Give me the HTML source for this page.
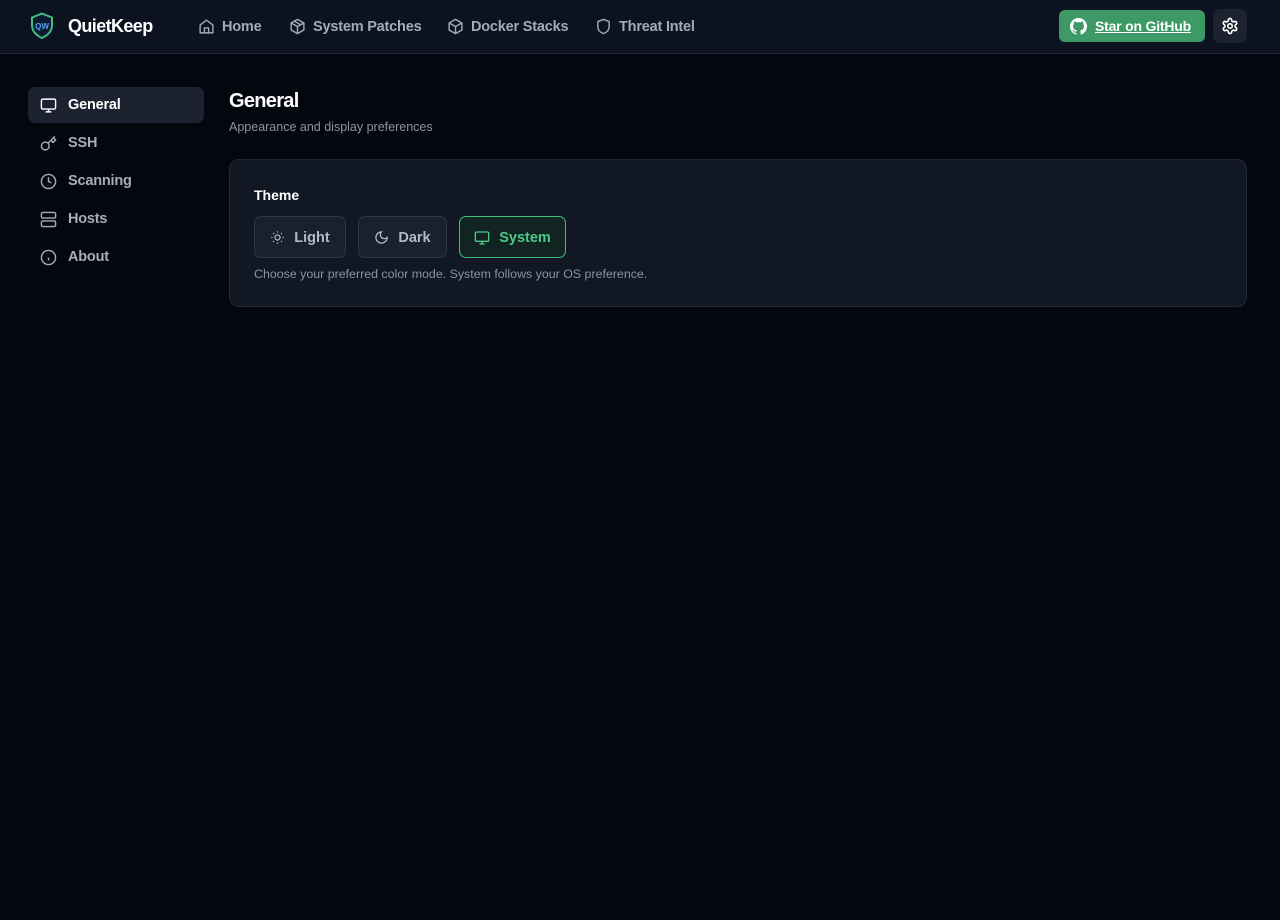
<!DOCTYPE html>
<html><head><meta charset="utf-8"><style>
*{box-sizing:border-box;margin:0;padding:0}
body{width:1280px;height:920px;background:#05070f;font-family:"Liberation Sans",sans-serif;color:#e5e7eb;position:relative;overflow:hidden}
.hdr{position:absolute;left:0;top:0;width:1280px;height:54px;background:#0d1220;border-bottom:1px solid #1c2333}
.abs{position:absolute}
svg{display:block}
.nav{position:absolute;top:18px;display:flex;align-items:center;gap:7px;color:#a3aab8;font-size:14.5px;font-weight:bold;letter-spacing:-0.2px}
.side{position:absolute;left:28px;width:176px;height:36px;display:flex;align-items:center;padding-left:12px;gap:11px;font-size:14.5px;font-weight:bold;color:#a7adb9;border-radius:7px;letter-spacing:-0.2px}
.btn{position:absolute;top:216px;height:42px;border-radius:7px;border:1px solid #2d3645;background:#1a202c;display:flex;align-items:center;justify-content:center;gap:9px;font-size:14.5px;font-weight:bold;color:#b3b9c5;padding-top:1px}
</style></head><body>
<div class="hdr"></div>
<svg class="abs" style="left:30px;top:12px" width="24" height="28" viewBox="0 0 24 28"><path d="M12 1.5 L22 5.5 V13 C22 19.5 17.5 23.5 12 26 C6.5 23.5 2 19.5 2 13 V5.5 Z" fill="#0f1b2e" stroke="#3fbf7f" stroke-width="2"/><text x="12" y="17" font-family="Liberation Sans" font-size="8" font-weight="bold" fill="#5aa0ff" text-anchor="middle">QW</text></svg>
<div class="abs" style="left:68px;top:16px;font-size:18px;font-weight:bold;color:#fff;letter-spacing:-0.6px">QuietKeep</div>
<div class="nav" style="left:198px"><svg width="17" height="17" viewBox="0 0 24 24" fill="none" stroke="#a3aab8" stroke-width="2" stroke-linejoin="round"><path d="M3 10 12 3l9 7v11H3z"/><path d="M9 21v-7h6v7"/></svg>Home</div>
<div class="nav" style="left:289px"><svg width="17" height="17" viewBox="0 0 24 24" fill="none" stroke="#a3aab8" stroke-width="2" stroke-linejoin="round"><path d="M12 2 21 7v10l-9 5-9-5V7z"/><path d="M3 7l9 5 9-5M12 12v10M7.5 4.5l9 5"/></svg>System Patches</div>
<div class="nav" style="left:447px"><svg width="17" height="17" viewBox="0 0 24 24" fill="none" stroke="#a3aab8" stroke-width="2" stroke-linejoin="round"><path d="M12 2 21 7v10l-9 5-9-5V7z"/><path d="M3 7l9 5 9-5M12 12v10"/></svg>Docker Stacks</div>
<div class="nav" style="left:595px"><svg width="17" height="17" viewBox="0 0 24 24" fill="none" stroke="#a3aab8" stroke-width="2" stroke-linejoin="round"><path d="M12 2 20 5v7c0 5-3.5 8.5-8 10-4.5-1.5-8-5-8-10V5z"/></svg>Threat Intel</div>
<div class="abs" style="left:1059px;top:10px;width:146px;height:32px;background:#3d9a67;border-radius:6px;display:flex;align-items:center;padding-left:11px;gap:8px;color:#fff;font-size:14px;font-weight:bold;letter-spacing:-0.2px"><svg width="17" height="17" viewBox="0 0 16 16" fill="#fff"><path d="M8 0C3.58 0 0 3.58 0 8c0 3.54 2.290 6.53 5.47 7.59.4.07.55-.17.55-.38v-1.330c-2.230.48-2.7-1.070-2.7-1.070-.36-.92-.89-1.170-.89-1.170-.73-.5.06-.49.06-.49.8.06 1.230.83 1.230.83.71 1.220 1.870.87 2.330.66.07-.52.28-.87.51-1.070-1.780-.2-3.640-.89-3.640-3.950 0-.87.31-1.590.82-2.150-.08-.2-.36-1.020.08-2.120 0 0 .67-.21 2.200.82a7.600 7.600 0 0 1 4 0c1.530-1.040 2.200-.82 2.200-.82.44 1.100.16 1.920.08 2.120.51.56.82 1.270.82 2.150 0 3.070-1.870 3.750-3.650 3.950.29.25.54.73.54 1.480v2.190c0 .21.15.46.55.38A8 8 0 0 0 16 8c0-4.420-3.580-8-8-8z"/></svg><span style="text-decoration:underline">Star on GitHub</span></div>
<div class="abs" style="left:1213px;top:9px;width:34px;height:34px;background:#1c2230;border-radius:7px;display:flex;align-items:center;justify-content:center"><svg width="18" height="18" viewBox="0 0 24 24" fill="none" stroke="#fff" stroke-width="2.2" stroke-linejoin="round"><path d="M12.2 2h-.4a2 2 0 0 0-2 2v.2a2 2 0 0 1-1 1.7l-.4.3a2 2 0 0 1-2 0l-.2-.1a2 2 0 0 0-2.7.7l-.2.4a2 2 0 0 0 .7 2.7l.2.1a2 2 0 0 1 1 1.7v.5a2 2 0 0 1-1 1.8l-.2.1a2 2 0 0 0-.7 2.7l.2.4a2 2 0 0 0 2.7.7l.2-.1a2 2 0 0 1 2 0l.4.3a2 2 0 0 1 1 1.7v.2a2 2 0 0 0 2 2h.4a2 2 0 0 0 2-2v-.2a2 2 0 0 1 1-1.7l.4-.3a2 2 0 0 1 2 0l.2.1a2 2 0 0 0 2.7-.7l.2-.4a2 2 0 0 0-.7-2.7l-.2-.1a2 2 0 0 1-1-1.8v-.5a2 2 0 0 1 1-1.7l.2-.1a2 2 0 0 0 .7-2.7l-.2-.4a2 2 0 0 0-2.7-.7l-.2.1a2 2 0 0 1-2 0l-.4-.3a2 2 0 0 1-1-1.7V4a2 2 0 0 0-2-2z"/><circle cx="12" cy="12" r="3"/></svg></div>

<div class="side" style="top:87px;background:#1c2230;color:#fff"><svg width="17" height="17" viewBox="0 0 24 24" fill="none" stroke="#fff" stroke-width="2"><rect x="2" y="3" width="20" height="14" rx="2"/><path d="M8 21h8M12 17v4"/></svg>General</div>
<div class="side" style="top:125px"><svg width="17" height="17" viewBox="0 0 24 24" fill="none" stroke="#a7adb9" stroke-width="2"><circle cx="7.5" cy="15.5" r="5.5"/><path d="m21 2-9.6 9.6M15.5 7.5l3 3L22 7l-3-3"/></svg>SSH</div>
<div class="side" style="top:163px"><svg width="17" height="17" viewBox="0 0 24 24" fill="none" stroke="#a7adb9" stroke-width="2"><circle cx="12" cy="12" r="10"/><path d="M12 6v6l4 2"/></svg>Scanning</div>
<div class="side" style="top:201px"><svg width="17" height="17" viewBox="0 0 24 24" fill="none" stroke="#a7adb9" stroke-width="2"><rect x="2" y="2" width="20" height="8" rx="2"/><rect x="2" y="14" width="20" height="8" rx="2"/></svg>Hosts</div>
<div class="side" style="top:239px"><svg width="17" height="17" viewBox="0 0 24 24" fill="none" stroke="#a7adb9" stroke-width="2"><circle cx="12" cy="12" r="10"/><path d="M12 16v-4M12 8h.01"/></svg>About</div>

<div class="abs" style="left:229px;top:90px;font-size:20px;font-weight:bold;color:#fff;letter-spacing:-0.7px">General</div>
<div class="abs" style="left:229px;top:120px;font-size:12.5px;color:#8b93a1">Appearance and display preferences</div>
<div class="abs" style="left:229px;top:159px;width:1018px;height:148px;background:#111723;border:1px solid #222a38;border-radius:10px"></div>
<div class="abs" style="left:254px;top:187px;font-size:14px;font-weight:bold;color:#fff">Theme</div>
<div class="btn" style="left:254px;width:92px"><svg width="15" height="15" viewBox="0 0 24 24" fill="none" stroke="#b3b9c5" stroke-width="2"><circle cx="12" cy="12" r="4"/><path d="M12 2v2M12 20v2M4.9 4.9l1.4 1.4M17.7 17.7l1.4 1.4M2 12h2M20 12h2M4.9 19.1l1.4-1.4M17.7 6.3l1.4-1.4"/></svg>Light</div>
<div class="btn" style="left:358px;width:89px"><svg width="15" height="15" viewBox="0 0 24 24" fill="none" stroke="#b3b9c5" stroke-width="2"><path d="M12 3a6 6 0 0 0 9 9 9 9 0 1 1-9-9z"/></svg>Dark</div>
<div class="btn" style="left:459px;width:107px;background:#112421;border-color:#3fbf7f;color:#4ec98a"><svg width="16" height="16" viewBox="0 0 24 24" fill="none" stroke="#4ec98a" stroke-width="2"><rect x="2" y="3" width="20" height="14" rx="2"/><path d="M8 21h8M12 17v4"/></svg>System</div>
<div class="abs" style="left:254px;top:267px;font-size:12.4px;color:#8b93a1">Choose your preferred color mode. System follows your OS preference.</div>
</body></html>
